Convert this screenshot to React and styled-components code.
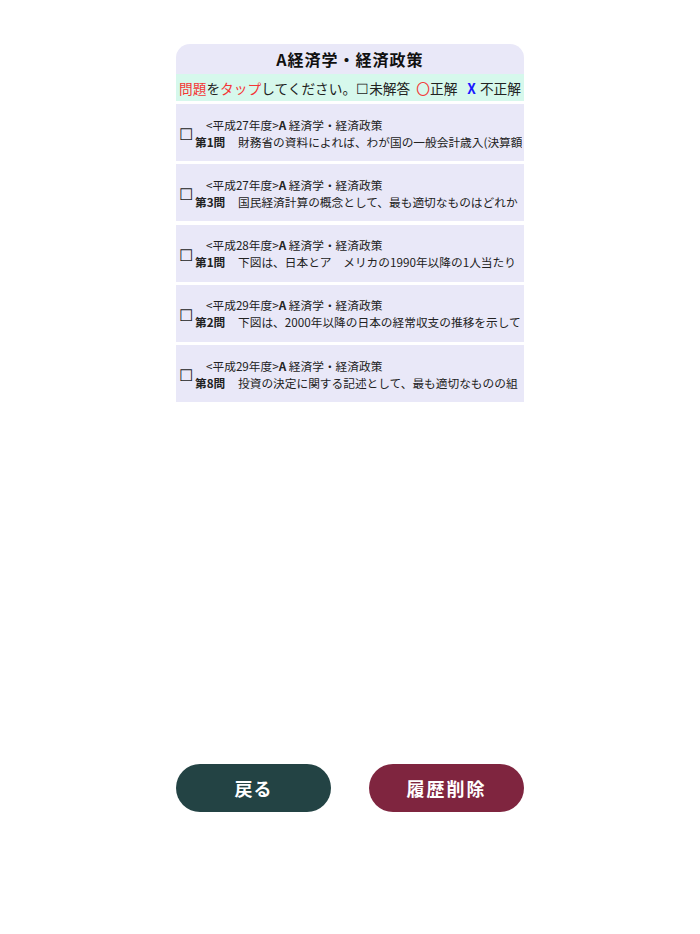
import styled, { createGlobalStyle } from 'styled-components';

const GlobalStyle = createGlobalStyle`
  body {
    margin: 0;
    background: #ffffff;
    font-family: "Noto Sans CJK JP", "Noto Sans", sans-serif;
    color: #222222;
  }
`;

const Page = styled.div`
  width: 348px;
  margin: 44px auto 0;
  display: flex;
  flex-direction: column;
`;

const Board = styled.div`
  height: 720px;
  display: flex;
  flex-direction: column;
`;

const Title = styled.div`
  height: 30px;
  background: #e9e8f8;
  border-radius: 14px 14px 0 0;
  display: flex;
  align-items: center;
  justify-content: center;
  font-size: 16px;
  font-weight: bold;
  letter-spacing: 1px;
  color: #111111;
`;

const Legend = styled.div`
  height: 27px;
  background: #d6f8ec;
  display: flex;
  align-items: center;
  justify-content: center;
  font-size: 13.7px;
  white-space: nowrap;
  color: #222222;
`;

const Red = styled.span`
  color: #f43636;
`;

const Mark = styled.span`
  color: ${(p) => p.$color || '#222222'};
  font-weight: ${(p) => (p.$bold ? 'bold' : 'normal')};
  margin-left: ${(p) => p.$gap || 0}px;
  margin-right: ${(p) => p.$after || 0}px;
`;

const List = styled.div`
  display: flex;
  flex-direction: column;
  gap: 3.25px;
  margin-top: 3px;
`;

const Item = styled.div`
  height: 57px;
  background: #e9e8f8;
  display: flex;
  align-items: center;
  padding-left: 3px;
  overflow: hidden;
  cursor: pointer;
`;

const Box = styled.span`
  font-size: 16px;
  line-height: 1;
  width: 16px;
  margin-top: 1px;
  flex-shrink: 0;
`;

const Lines = styled.div`
  display: flex;
  flex-direction: column;
  min-width: 0;
  font-size: 11.7px;
  line-height: 17px;
  white-space: nowrap;
`;

const Year = styled.div`
  padding-left: 11px;
`;

const Bold = styled.b`
  font-weight: bold;
  margin-right: ${(p) => p.$after || 0}px;
`;

const Question = styled.div`
  overflow: hidden;
`;

const Buttons = styled.div`
  display: flex;
  justify-content: space-between;
`;

const Button = styled.button`
  width: 155px;
  height: 48px;
  border: none;
  border-radius: 24px;
  background: ${(p) => p.$bg};
  color: #ffffff;
  font-family: "Noto Sans CJK JP", "Noto Sans", sans-serif;
  font-size: 18px;
  font-weight: bold;
  letter-spacing: ${(p) => p.$spacing}px;
  cursor: pointer;
  padding: 0;
`;

const items = [
  { year: '平成27年度', no: 1, text: '財務省の資料によれば、わが国の一般会計歳入(決算額' },
  { year: '平成27年度', no: 3, text: '国民経済計算の概念として、最も適切なものはどれか' },
  { year: '平成28年度', no: 1, text: '下図は、日本とア　メリカの1990年以降の1人当たり' },
  { year: '平成29年度', no: 2, text: '下図は、2000年以降の日本の経常収支の推移を示して' },
  { year: '平成29年度', no: 8, text: '投資の決定に関する記述として、最も適切なものの組' },
];

export default function App() {
  return (
    <>
      <GlobalStyle />
      <Page>
        <Board>
          <Title>A経済学・経済政策</Title>
          <Legend>
            <Red>問題</Red>を<Red>タップ</Red>してください。
            <Mark>☐</Mark>未解答
            <Mark $color="#f43636" $gap={6}>〇</Mark>正解
            <Mark $color="#1a1aff" $bold $gap={10} $after={4}>X</Mark>不正解
          </Legend>
          <List>
            {items.map((it, i) => (
              <Item key={i}>
                <Box>☐</Box>
                <Lines>
                  <Year>
                    &lt;{it.year}&gt;<Bold>A</Bold> 経済学・経済政策
                  </Year>
                  <Question>
                    <Bold $after={1}>第{it.no}問</Bold>　{it.text}
                  </Question>
                </Lines>
              </Item>
            ))}
          </List>
        </Board>
        <Buttons>
          <Button $bg="#234344" $spacing={1}>戻る</Button>
          <Button $bg="#7f253f" $spacing={2}>履歴削除</Button>
        </Buttons>
      </Page>
    </>
  );
}
